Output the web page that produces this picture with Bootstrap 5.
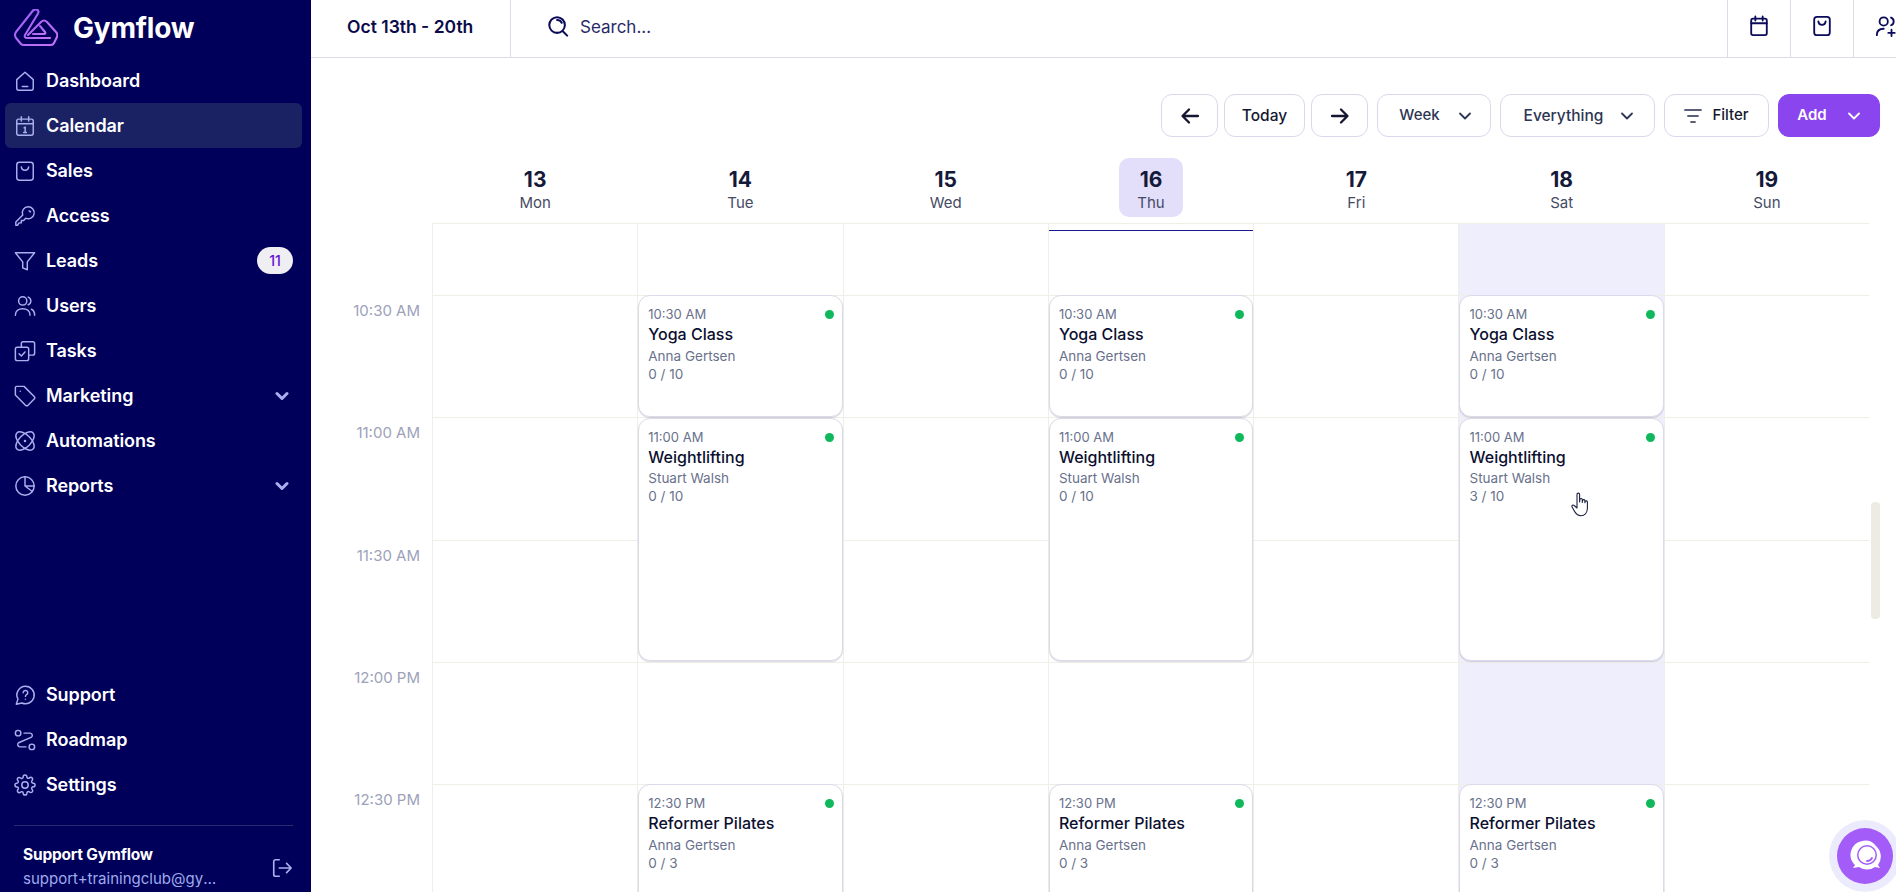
<!DOCTYPE html>
<html lang="en">
<head>
  <meta charset="UTF-8">
  <meta name="viewport" content="width=device-width, initial-scale=1.0">
  <title>Gymflow - Calendar</title>
  <link href="https://cdn.jsdelivr.net/npm/bootstrap@5.3.1/dist/css/bootstrap.min.css" rel="stylesheet">
  <style>
    html, body { height: 100%; }
    body {
      font-family: Inter, "Noto Sans", sans-serif;
      color: #0b0b4a;
      overflow: hidden;
    }
    .app-shell { height: 892px; }
    .side-bar {
      width: 311px;
      flex: 0 0 311px;
      background: #00005a;
      color: #fff;
    }
    .brand-row { height: 58px; padding: 0 0 3px 14px; gap: 15px; }
    .brand-name { font-size: 28px; font-weight: 700; letter-spacing: -.2px; }
    .side-link.nav-link {
      height: 45px;
      margin: 0 9px 0 5px;
      padding: 0 9px 0 9px;
      gap: 10px;
      color: #fff;
      font-size: 18px;
      font-weight: 600;
      letter-spacing: -.1px;
      border-radius: 6px;
    }
    .side-link.is-current { background: #1b2263; }
    .side-icon { width: 22px; height: 22px; flex: 0 0 22px; fill: none; stroke: #a9b0ee; stroke-width: 1.6; stroke-linecap: round; stroke-linejoin: round; }
    .side-chev { width: 14px; height: 14px; margin-right: 4px; fill: none; stroke: #a9b0ee; stroke-width: 3; stroke-linecap: round; stroke-linejoin: round; }
    .lead-count {
      width: 36px;
      height: 27px;
      border-radius: 14px;
      background: #efeff3;
      color: #6610d6;
      font-size: 14px;
      font-weight: 500;
    }
    .side-foot { margin: 18px 18px 0 14px; padding: 17px 0 1px 9px; border-top: 1px solid #2a2c70; }
    .foot-name { font-size: 15.5px; font-weight: 700; line-height: 24px; letter-spacing: -.2px; }
    .foot-mail { width: 196px; font-size: 15px; line-height: 24px; color: #9fabec; }
    .foot-out { width: 22px; height: 22px; margin-top: 14px; fill: none; stroke: #a9b0ee; stroke-width: 1.8; stroke-linecap: round; stroke-linejoin: round; }

    .top-strip { height: 58px; border-bottom: 1px solid #dcdce6; flex: 0 0 58px; }
    .range-box { width: 200px; padding: 0 0 2px 36px; border-right: 1px solid #dcdce6; font-size: 17.5px; font-weight: 600; }
    .find-box { padding: 0 0 5px 36px; gap: 11px; font-size: 17px; color: #2a2a68; }
    .find-box span { margin-top: 4px; }
    .find-box svg { width: 22px; height: 22px; fill: none; stroke: #0b0b5a; stroke-width: 2.2; stroke-linecap: round; }
    .quick-btn { width: 63px; padding-bottom: 5px; border-left: 1px solid #dcdce6; flex: 0 0 auto; }
    .quick-btn svg { width: 22px; height: 22px; fill: none; stroke: #0b0b5a; stroke-width: 2; stroke-linecap: round; stroke-linejoin: round; }
    .quick-last { width: 43px; justify-content: flex-start !important; padding-left: 21px; }

    .tool-strip { padding: 36px 16px 0 0; height: 80px; flex: 0 0 auto; gap: 11px; }
    .tool-btn.btn {
      height: 43px;
      padding: 0;
      border: 1px solid #d9d9ec;
      border-radius: 11px;
      background: #fff;
      color: #2d3654;
      font-size: 15px;
      font-weight: 500;
      gap: 18px;
    }
    .tool-btn svg { fill: none; stroke: currentColor; stroke-linecap: round; stroke-linejoin: round; }
    .nav-pair { gap: 6px; margin-right: -2px; }
    .tool-arrow { width: 57px; color: #14172f !important; }
    .tool-today { width: 81px; color: #14172f !important; font-size: 15.5px !important; }
    .tool-week { width: 114px; margin-right: -2px; padding-left: 3px !important; }
    .tool-every { width: 155px; margin-right: -2px; padding-left: 3px !important; font-size: 15.5px !important; gap: 17px !important; }
    .tool-filter { width: 105px; gap: 10px !important; color: #14172f !important; }
    .tool-add.btn { width: 102px; margin-left: -2px; gap: 20px; background: #8b45ee; border-color: #8b45ee; color: #fff; font-weight: 600; }
    .filter-lines { stroke: #5b6078 !important; }

    .cal-cols { display: grid; grid-template-columns: 121px repeat(7, 205.3px); }
    .day-head { padding: 20px 0 0 1px; height: 85px; text-align: center; }
    .day-pill { display: inline-block; min-width: 64px; height: 59px; padding-top: 9px; border-radius: 10px; }
    .day-pill.is-today { background: #e3dffb; }
    .day-num { font-size: 21px; font-weight: 700; line-height: 26px; color: #15193a; }
    .day-name { font-size: 15px; line-height: 19px; color: #454b63; }

    .cal-body { grid-auto-rows: 122.25px; grid-template-rows: 72px; }
    .time-tag { padding: 5px 12px 0 0; text-align: right; font-size: 15px; line-height: 22px; color: #9da2ba; }
    .slot { border-left: 1px solid #efefe8; border-top: 1px solid #efefe8; position: relative; }
    .slot-sat { background: #eeeefc; }
    .now-line { position: absolute; left: 0; right: 0; top: 6px; height: 1px; background: #1a1a8c; }
    .class-card {
      margin: 0 0 0 1px;
      padding: 8px 8px 0 9px;
      position: relative;
      background: #fff;
      border: 1px solid #dcdaea;
      border-radius: 12px;
      box-shadow: 0 1px 1px rgba(40, 40, 80, .16);
      overflow: hidden;
    }
    .class-time { font-size: 13px; line-height: 20px; color: #69718c; }
    .class-title { font-size: 16px; font-weight: 500; line-height: 21px; color: #0b0f30; }
    .class-meta { font-size: 13.5px; line-height: 18px; color: #69718c; }
    .class-meta.first-meta { margin-top: 2px; }
    .is-tall .class-meta.first-meta { margin-top: 1px; }
    .live-dot { position: absolute; top: 14px; right: 8px; width: 9px; height: 9px; border-radius: 50%; background: #10b85c; }

    .fake-scroll { position: absolute; left: 1871px; top: 502px; width: 9px; height: 117px; border-radius: 4px; background: #ecece4; }
    .hand-cursor { position: absolute; left: 1571px; top: 492px; width: 20px; height: 25px; }
    .chat-bubble { position: absolute; left: 1829px; top: 820px; width: 72px; height: 72px; border-radius: 50%; background: #ecebfd; display: flex; align-items: center; justify-content: center; }
    .chat-bubble-in { width: 56px; height: 56px; border-radius: 50%; background: #a35cf8; display: flex; align-items: center; justify-content: center; }
  </style>
</head>
<body>
  <div class="app-shell d-flex position-relative overflow-hidden">
    <!-- Sidebar -->
    <aside class="side-bar d-flex flex-column">
      <div class="brand-row d-flex align-items-center">
        <svg width="44" height="38" viewBox="0 0 44 38" fill="none" stroke="url(#logoFade)" stroke-width="2.1" stroke-linecap="round" stroke-linejoin="round">
          <defs>
            <linearGradient id="logoFade" x1="0" y1="0" x2="1" y2="1">
              <stop offset="0" stop-color="#9a5cf4"/>
              <stop offset="1" stop-color="#c672f6"/>
            </linearGradient>
          </defs>
          <path d="M19 1.500 2 23q-2 3 0 6l5 6q1 1 3 1h27q2 0 3-2l3-6q1-3-1-5l-9-10q-3-3-6 0l-13 13"/>
          <path d="M19 1.500q3-2 5 0 1 1 0 3L11 26q-1 3 2 3h23"/>
          <path d="M26 17l5 6q1 2-1 2H19"/>
        </svg>
        <span class="brand-name">Gymflow</span>
      </div>

      <nav class="nav flex-column">
        <a class="nav-link side-link d-flex align-items-center" href="#"><svg class="side-icon" viewBox="0 0 24 24"><path d="M3 10.500 12 2.500l9 8V20a2 2 0 0 1-2 2H5a2 2 0 0 1-2-2z"/><path d="M9 18h6"/></svg>Dashboard</a>
        <a class="nav-link side-link is-current d-flex align-items-center" href="#"><svg class="side-icon" viewBox="0 0 24 24"><rect x="3" y="4.500" width="18" height="17.500" rx="2"/><path d="M3 9.500h18M8 2v4.500M16 2v4.500M11 14l1.200-.8V19M10.500 19h3"/></svg>Calendar</a>
        <a class="nav-link side-link d-flex align-items-center" href="#"><svg class="side-icon" viewBox="0 0 24 24"><rect x="3" y="2.500" width="18" height="19.500" rx="3"/><path d="M8 7.500c.5 5 7.500 5 8 0"/></svg>Sales</a>
        <a class="nav-link side-link d-flex align-items-center" href="#"><svg class="side-icon" viewBox="0 0 24 24"><path d="M15.500 2a6.500 6.500 0 1 1-2.700 12.400L10.500 17H8v2.500H5.500L4 22H2v-3.500l7.500-7.600A6.500 6.500 0 0 1 15.500 2z"/><path d="M16.500 6.500l1.500 1"/></svg>Access</a>
        <a class="nav-link side-link d-flex align-items-center" href="#"><svg class="side-icon" viewBox="0 0 24 24"><path d="M1.500 3h21l-8 10v8.500l-5-2V13z"/></svg>Leads<span class="lead-count d-flex align-items-center justify-content-center ms-auto">11</span></a>
        <a class="nav-link side-link d-flex align-items-center" href="#"><svg class="side-icon" viewBox="0 0 24 24"><circle cx="9.500" cy="6.500" r="4.500"/><path d="M1.500 22c0-4.500 3.500-7 8-7s8 2.500 8 7"/><path d="M15.500 2.300a4.500 4.500 0 0 1 0 8.400M19 15.500c2.200 1 3.500 3.300 3.500 6.500"/></svg>Users</a>
        <a class="nav-link side-link d-flex align-items-center" href="#"><svg class="side-icon" viewBox="0 0 24 24"><rect x="1.500" y="8" width="14.500" height="14.500" rx="2"/><path d="M8 8V4a2 2 0 0 1 2-2h10.500a2 2 0 0 1 2 2v10.500a2 2 0 0 1-2 2H16"/><path d="M5.500 15l2.500 2.500 4-4.500"/></svg>Tasks</a>
        <a class="nav-link side-link d-flex align-items-center" href="#"><svg class="side-icon" viewBox="0 0 24 24"><path d="M1.500 3a1.500 1.500 0 0 1 1.500-1.500h8L22 12.500a2 2 0 0 1 0 2.800L15.300 22a2 2 0 0 1-2.800 0L1.500 11z"/><path d="M6.800 6.800h.01"/></svg>Marketing<svg class="side-chev ms-auto" viewBox="0 0 14 14"><path d="M2 4.500l5 5 5-5"/></svg></a>
        <a class="nav-link side-link d-flex align-items-center" href="#"><svg class="side-icon" viewBox="0 0 24 24"><ellipse cx="12" cy="12" rx="12.500" ry="6.500" transform="rotate(45 12 12)"/><ellipse cx="12" cy="12" rx="12.500" ry="6.500" transform="rotate(-45 12 12)"/><circle cx="12" cy="12" r=".6"/></svg>Automations</a>
        <a class="nav-link side-link d-flex align-items-center" href="#"><svg class="side-icon" viewBox="0 0 24 24"><circle cx="12" cy="12" r="10"/><path d="M12 2v10h10M12 12l8 6"/></svg>Reports<svg class="side-chev ms-auto" viewBox="0 0 14 14"><path d="M2 4.500l5 5 5-5"/></svg></a>
      </nav>

      <nav class="nav flex-column mt-auto">
        <a class="nav-link side-link d-flex align-items-center" href="#"><svg class="side-icon" viewBox="0 0 24 24"><path d="M12.500 2.500a9.500 9.500 0 1 1-3.800 18.200L2.500 22l1.800-5.500A9.500 9.500 0 0 1 12.500 2.500z"/><path d="M10 9.500a2.500 2.500 0 1 1 3.700 2.200c-.9.500-1.200 1-1.200 1.800M12.500 16.500h.01"/></svg>Support</a>
        <a class="nav-link side-link d-flex align-items-center" href="#"><svg class="side-icon" viewBox="0 0 24 24"><circle cx="4.500" cy="4.500" r="3"/><circle cx="19.500" cy="19.500" r="3"/><path d="M11 4.500h6.500a2.500 2.500 0 0 1 1.700 4.300L5 15a2.500 2.500 0 0 0 1.500 4.500H13"/></svg>Roadmap</a>
        <a class="nav-link side-link d-flex align-items-center" href="#"><svg class="side-icon" viewBox="0 0 24 24"><circle cx="12" cy="12" r="3.500"/><path d="M19.400 15a1.650 1.650 0 0 0 .33 1.820l.06.06a2 2 0 0 1 0 2.830 2 2 0 0 1-2.830 0l-.06-.06a1.650 1.650 0 0 0-1.820-.33 1.650 1.650 0 0 0-1 1.510V21a2 2 0 0 1-2 2 2 2 0 0 1-2-2v-.09A1.650 1.650 0 0 0 9 19.400a1.650 1.650 0 0 0-1.820.33l-.06.06a2 2 0 0 1-2.830 0 2 2 0 0 1 0-2.830l.06-.06a1.650 1.650 0 0 0 .33-1.820 1.650 1.650 0 0 0-1.510-1H3a2 2 0 0 1-2-2 2 2 0 0 1 2-2h.09A1.650 1.650 0 0 0 4.600 9a1.650 1.650 0 0 0-.33-1.820l-.06-.06a2 2 0 0 1 0-2.830 2 2 0 0 1 2.830 0l.06.06a1.650 1.650 0 0 0 1.820.33H9a1.650 1.650 0 0 0 1-1.510V3a2 2 0 0 1 2-2 2 2 0 0 1 2 2v.09a1.650 1.650 0 0 0 1 1.510 1.650 1.650 0 0 0 1.820-.33l.06-.06a2 2 0 0 1 2.830 0 2 2 0 0 1 0 2.830l-.06.06a1.650 1.650 0 0 0-.33 1.820V9a1.650 1.650 0 0 0 1.510 1H21a2 2 0 0 1 2 2 2 2 0 0 1-2 2h-.09a1.650 1.650 0 0 0-1.510 1z"/></svg>Settings</a>
      </nav>

      <div class="side-foot d-flex justify-content-between">
        <div>
          <div class="foot-name">Support Gymflow</div>
          <div class="foot-mail text-truncate">support+trainingclub@gymflow.io</div>
        </div>
        <svg class="foot-out" viewBox="0 0 24 24"><path d="M9 3H5a2 2 0 0 0-2 2v14a2 2 0 0 0 2 2h4"/><path d="M9 12h13M17 7l5 5-5 5"/></svg>
      </div>
    </aside>

    <!-- Main -->
    <main class="flex-grow-1 d-flex flex-column overflow-hidden">
      <header class="top-strip d-flex">
        <div class="range-box d-flex align-items-center">Oct 13th - 20th</div>
        <div class="find-box d-flex align-items-center flex-grow-1">
          <svg viewBox="0 0 24 24"><circle cx="11" cy="11" r="8.500"/><path d="M17.500 18l4.500 4.500M11 5.500a5.500 5.500 0 0 1 5 3"/></svg>
          <span>Search...</span>
        </div>
        <div class="quick-btn d-flex align-items-center justify-content-center"><svg viewBox="0 0 24 24"><rect x="3.500" y="4" width="17" height="18" rx="2"/><path d="M3.500 9h17M8 1.500V6M16 1.500V6"/></svg></div>
        <div class="quick-btn d-flex align-items-center justify-content-center"><svg viewBox="0 0 24 24"><rect x="3.500" y="2" width="17" height="20" rx="3"/><path d="M8 7c.5 5 7.500 5 8 0"/></svg></div>
        <div class="quick-btn quick-last d-flex align-items-center"><svg viewBox="0 0 24 24" class="flex-shrink-0"><circle cx="9.500" cy="7" r="4.500"/><path d="M2 22c0-4.500 3-7 7.500-7M17.500 2.800a4.500 4.500 0 0 1 0 8.400M18 16v7M14.500 19.500h7"/></svg></div>
      </header>

      <div class="tool-strip d-flex justify-content-end">
        <div class="nav-pair d-flex">
          <button class="btn tool-btn tool-arrow d-flex align-items-center justify-content-center"><svg width="20" height="20" viewBox="0 0 20 20" stroke-width="2.3"><path d="M18 10H3M9 3.500 2.500 10 9 16.500"/></svg></button>
          <button class="btn tool-btn tool-today d-flex align-items-center justify-content-center">Today</button>
          <button class="btn tool-btn tool-arrow d-flex align-items-center justify-content-center"><svg width="20" height="20" viewBox="0 0 20 20" stroke-width="2.3"><path d="M2 10h15M11 3.500l6.500 6.500-6.500 6.500"/></svg></button>
        </div>
        <button class="btn tool-btn tool-week d-flex align-items-center justify-content-center">Week<svg width="14" height="14" viewBox="0 0 14 14" stroke-width="1.8"><path d="M2 4.500l5 5 5-5"/></svg></button>
        <button class="btn tool-btn tool-every d-flex align-items-center justify-content-center">Everything<svg width="14" height="14" viewBox="0 0 14 14" stroke-width="1.8"><path d="M2 4.500l5 5 5-5"/></svg></button>
        <button class="btn tool-btn tool-filter d-flex align-items-center justify-content-center"><svg class="filter-lines" width="18" height="16" viewBox="0 0 18 16" stroke-width="1.8"><path d="M1 2h16M4 8h10M7 14h4"/></svg>Filter</button>
        <button class="btn tool-btn tool-add d-flex align-items-center justify-content-center">Add<svg width="14" height="14" viewBox="0 0 14 14" stroke-width="1.8"><path d="M2 4.500l5 5 5-5"/></svg></button>
      </div>

      <div class="cal-cols" id="dayRow"></div>
      <div class="cal-cols cal-body flex-grow-1" id="calGrid"></div>
    </main>

    <div class="fake-scroll"></div>

    <svg class="hand-cursor" viewBox="0 0 20 25" fill="#fff" stroke="#1d2240" stroke-width="1.1" stroke-linejoin="round"><path d="M6 2.500c0-1.800 2.600-1.800 2.600 0V10l.3-2.500c.2-1.400 2.400-1.300 2.400.2V10.500l.3-2c.3-1.300 2.300-1.100 2.300.3v2l.3-1.200c.4-1.200 2.200-.9 2.200.5v5.900c0 4.500-2.600 7.700-6.500 7.700-3 0-4.600-1.500-6-3.800L1.100 15c-.8-1.400.9-2.700 2.100-1.500L6 16z"/></svg>

    <div class="chat-bubble">
      <div class="chat-bubble-in">
        <svg width="36" height="34" viewBox="0 0 36 34">
          <path fill="#fff" d="M15 2a14 14 0 0 1 14 5 14 14 0 0 1 2 19l2 3-5-1a14 14 0 0 1-16 0l-6 1 2-3A14 14 0 0 1 15 2z"/>
          <circle cx="20" cy="16" r="10" fill="#a35cf8"/>
          <circle cx="20" cy="16" r="8.500" fill="#fff"/>
          <path d="M25 19c-1 2-3 3-5 3" fill="none" stroke="#a35cf8" stroke-width="1.8" stroke-linecap="round"/>
        </svg>
      </div>
    </div>
  </div>

  <script>
    const days = [
      { num: 13, name: "Mon" }, { num: 14, name: "Tue" }, { num: 15, name: "Wed" },
      { num: 16, name: "Thu", today: true }, { num: 17, name: "Fri" }, { num: 18, name: "Sat" }, { num: 19, name: "Sun" }
    ];
    const times = ["", "10:30 AM", "11:00 AM", "11:30 AM", "12:00 PM", "12:30 PM"];

    // column 2 = Tue, 4 = Thu, 6 = Sat
    const classes = [];
    [2, 4, 6].forEach(col => {
      classes.push({ col, row: 2, span: 1, time: "10:30 AM", title: "Yoga Class", coach: "Anna Gertsen", count: "0 / 10" });
      classes.push({ col, row: 3, span: 2, time: "11:00 AM", title: "Weightlifting", coach: "Stuart Walsh", count: col === 6 ? "3 / 10" : "0 / 10", gap: true });
      classes.push({ col, row: 6, span: 1, time: "12:30 PM", title: "Reformer Pilates", coach: "Anna Gertsen", count: "0 / 3" });
    });

    let head = "<div></div>";
    days.forEach(d => {
      head += `
        <div class="day-head">
          <div class="day-pill ${d.today ? "is-today" : ""}">
            <div class="day-num">${d.num}</div>
            <div class="day-name">${d.name}</div>
          </div>
        </div>`;
    });
    document.getElementById("dayRow").innerHTML = head;

    let cells = "";
    times.forEach((t, r) => {
      const row = r + 1;
      cells += `<div class="time-tag" style="grid-column:1;grid-row:${row}">${t}</div>`;
      days.forEach((d, c) => {
        cells += `<div class="slot ${c === 5 ? "slot-sat" : ""}" style="grid-column:${c + 2};grid-row:${row}">${r === 0 && d.today ? '<div class="now-line"></div>' : ""}</div>`;
      });
    });
    classes.forEach(k => {
      cells += `
        <div class="class-card ${k.gap ? "is-tall" : ""}" style="grid-column:${k.col + 1};grid-row:${k.row} / span ${k.span};margin-top:${k.gap ? 1 : 0}px;margin-bottom:${k.gap ? 1 : 0}px">
          <span class="live-dot"></span>
          <div class="class-time">${k.time}</div>
          <div class="class-title">${k.title}</div>
          <div class="class-meta first-meta">${k.coach}</div>
          <div class="class-meta">${k.count}</div>
        </div>`;
    });
    document.getElementById("calGrid").innerHTML = cells;
  </script>
  <script src="https://cdn.jsdelivr.net/npm/bootstrap@5.3.1/dist/js/bootstrap.bundle.min.js"></script>
</body>
</html>
